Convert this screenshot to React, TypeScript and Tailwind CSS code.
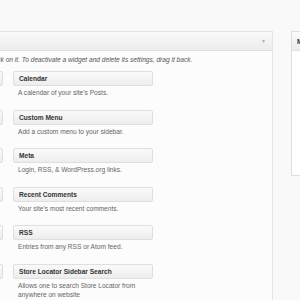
const leftColumn = ["Archives", "Categories", "Links", "Pages", "Recent Posts", "Search"];

const widgets = [
  { name: "Calendar", desc: "A calendar of your site’s Posts." },
  { name: "Custom Menu", desc: "Add a custom menu to your sidebar." },
  { name: "Meta", desc: "Login, RSS, & WordPress.org links." },
  { name: "Recent Comments", desc: "Your site’s most recent comments." },
  { name: "RSS", desc: "Entries from any RSS or Atom feed." },
  {
    name: "Store Locator Sidebar Search",
    desc: "Allows one to search Store Locator from anywhere on website",
  },
];

function WidgetBar({ name }: { name: string }) {
  return (
    <div className="h-[15px] rounded-[2px] border border-[#dfdfdf] bg-gradient-to-b from-[#fafafa] to-[#ededed] pl-[5px] text-[6.6px] font-bold leading-[13px] text-[#333] whitespace-nowrap overflow-hidden">
      {name}
    </div>
  );
}

export default function App() {
  return (
    <div
      className="w-[300px] h-[300px] overflow-hidden bg-[#f9f9f9] pt-[31px]"
      style={{ fontFamily: '"Liberation Sans", Arial, sans-serif' }}
    >
      <div className="flex items-start gap-[18px]">
        {/* Available widgets panel */}
        <div className="-ml-[137px] w-[410px] shrink-0 border border-l-0 border-[#e3e3e3] bg-[#fcfcfc]">
          <div className="relative h-[19px] border-b border-[#dfdfdf] bg-gradient-to-b from-[#f9f9f9] to-[#ececec]">
            <span className="absolute right-[6px] top-[6px] text-[5px] text-[#aaa]">▼</span>
          </div>
          <p className="mt-[3px] ml-[4px] whitespace-nowrap text-[6.6px] italic leading-[12px] text-[#555]">
            To activate a widget drag it to a sidebar or click on it. To deactivate a widget and delete its settings, drag it back.
          </p>
          <div className="mt-[5px] flex gap-[10px]">
            <div className="w-[140px] flex flex-col">
              {leftColumn.map((n) => (
                <div key={n} className="h-[38.6px]">
                  <WidgetBar name={n} />
                </div>
              ))}
            </div>
            <div className="w-[140px] flex flex-col">
              {widgets.map((w) => (
                <div key={w.name} className="min-h-[38.6px]">
                  <WidgetBar name={w.name} />
                  <p className="mt-[2px] pl-[5px] pr-[4px] text-[6.6px] leading-[9.5px] text-[#666]">{w.desc}</p>
                </div>
              ))}
            </div>
          </div>
        </div>

        {/* Sidebar panel */}
        <div className="w-[200px] shrink-0 border border-[#dfdfdf] bg-white h-[145px]">
          <div className="h-[19px] border-b border-[#dfdfdf] bg-gradient-to-b from-[#f9f9f9] to-[#ececec] pl-[5px] text-[7px] font-bold leading-[19px] text-[#333]">
            Main Sidebar
          </div>
        </div>
      </div>
    </div>
  );
}
